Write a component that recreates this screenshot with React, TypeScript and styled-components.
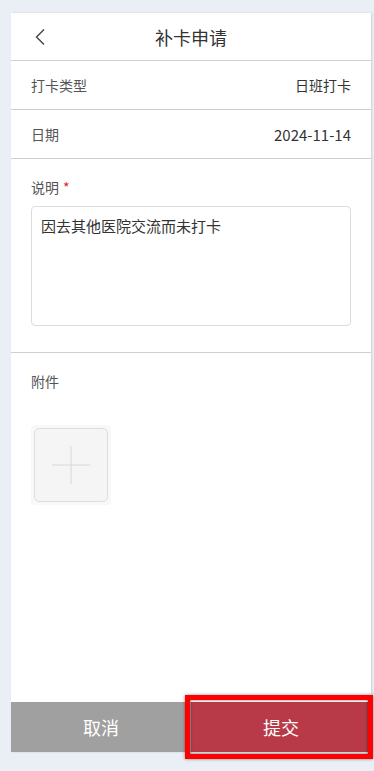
import React, { useState } from 'react';
import styled, { createGlobalStyle } from 'styled-components';

const GlobalStyle = createGlobalStyle`
  html, body {
    margin: 0;
    padding: 0;
    background: #eaeef5;
    font-family: "Noto Sans CJK SC", "Noto Sans", sans-serif;
  }
`;

const Page = styled.div`
  padding: 13px 3px 19px 11px;
`;

const Card = styled.div`
  background: #fff;
  height: 739px;
  display: flex;
  flex-direction: column;
  box-shadow: 1px 0 2px rgba(0, 0, 0, 0.12);
`;

const Header = styled.div`
  height: 47px;
  border-bottom: 1px solid #cfcfcf;
  display: flex;
  align-items: center;
  justify-content: center;
  position: relative;
  font-size: 18px;
  color: #333;
`;

const BackButton = styled.button`
  position: absolute;
  left: 22px;
  top: 15px;
  background: none;
  border: none;
  padding: 0;
  width: 16px;
  height: 18px;
  cursor: pointer;
`;

const Row = styled.div`
  height: 48px;
  border-bottom: 1px solid #cfcfcf;
  display: flex;
  align-items: center;
  justify-content: space-between;
  padding: 0 20px;
`;

const Label = styled.div`
  font-size: 14px;
  color: #555;
`;

const Value = styled.div<{ $numeric?: boolean }>`
  font-size: ${(p) => (p.$numeric ? '15px' : '14px')};
  color: #333;
`;

const Section = styled.div<{ $bordered?: boolean }>`
  padding: 18px 20px 26px;
  border-bottom: ${(p) => (p.$bordered ? '1px solid #cfcfcf' : 'none')};
`;

const Required = styled.span`
  color: #e0242b;
  margin-left: 4px;
`;

const TextArea = styled.textarea`
  display: block;
  box-sizing: border-box;
  width: 100%;
  height: 120px;
  margin-top: 9px;
  border: 1px solid #dcdcdc;
  border-radius: 4px;
  padding: 8px 9px;
  font-family: inherit;
  font-size: 15px;
  color: #333;
  line-height: 22px;
  resize: none;
  outline: none;
`;

const UploadWrap = styled.div`
  margin-top: 34px;
  width: 80px;
  height: 80px;
  background: #f8f8f8;
  border-radius: 4px;
  display: flex;
  align-items: center;
  justify-content: center;
`;

const UploadBox = styled.button`
  width: 74px;
  height: 74px;
  box-sizing: border-box;
  border: 1px solid #dedede;
  border-radius: 5px;
  background: #f5f5f5;
  display: flex;
  align-items: center;
  justify-content: center;
  padding: 0;
  cursor: pointer;
`;

const Spacer = styled.div`
  flex: 1;
`;

const Footer = styled.div`
  height: 50px;
  display: flex;
  position: relative;
`;

const FooterButton = styled.button<{ $primary?: boolean }>`
  flex: 1;
  border: none;
  font-family: inherit;
  font-size: 18px;
  color: #fff;
  background: ${(p) => (p.$primary ? '#b83a48' : '#a0a0a0')};
  cursor: pointer;
`;

const Highlight = styled.div`
  position: absolute;
  left: 174px;
  right: -2px;
  top: -7px;
  bottom: -7px;
  border: 5px solid #ff0000;
  box-shadow: 0 0 3px rgba(0, 0, 0, 0.45), inset 0 0 3px rgba(0, 0, 0, 0.6);
  pointer-events: none;
`;

export default function App() {
  const [note, setNote] = useState('因去其他医院交流而未打卡');

  return (
    <Page>
      <GlobalStyle />
      <Card>
        <Header>
          <BackButton aria-label="返回">
            <svg width="16" height="18" viewBox="0 0 16 18">
              <path d="M11 1.5 L3.5 9 L11 16.5" fill="none" stroke="#444" strokeWidth="1.4" />
            </svg>
          </BackButton>
          补卡申请
        </Header>
        <Row>
          <Label>打卡类型</Label>
          <Value>日班打卡</Value>
        </Row>
        <Row>
          <Label>日期</Label>
          <Value $numeric>2024-11-14</Value>
        </Row>
        <Section $bordered>
          <Label>
            说明<Required>*</Required>
          </Label>
          <TextArea value={note} onChange={(e) => setNote(e.target.value)} />
        </Section>
        <Section>
          <Label>附件</Label>
          <UploadWrap>
            <UploadBox aria-label="上传">
              <svg width="38" height="38" viewBox="0 0 38 38">
                <path d="M19 0 V38 M0 19 H38" stroke="#d8d8d8" strokeWidth="1" />
              </svg>
            </UploadBox>
          </UploadWrap>
        </Section>
        <Spacer />
        <Footer>
          <FooterButton>取消</FooterButton>
          <FooterButton $primary>提交</FooterButton>
          <Highlight />
        </Footer>
      </Card>
    </Page>
  );
}
